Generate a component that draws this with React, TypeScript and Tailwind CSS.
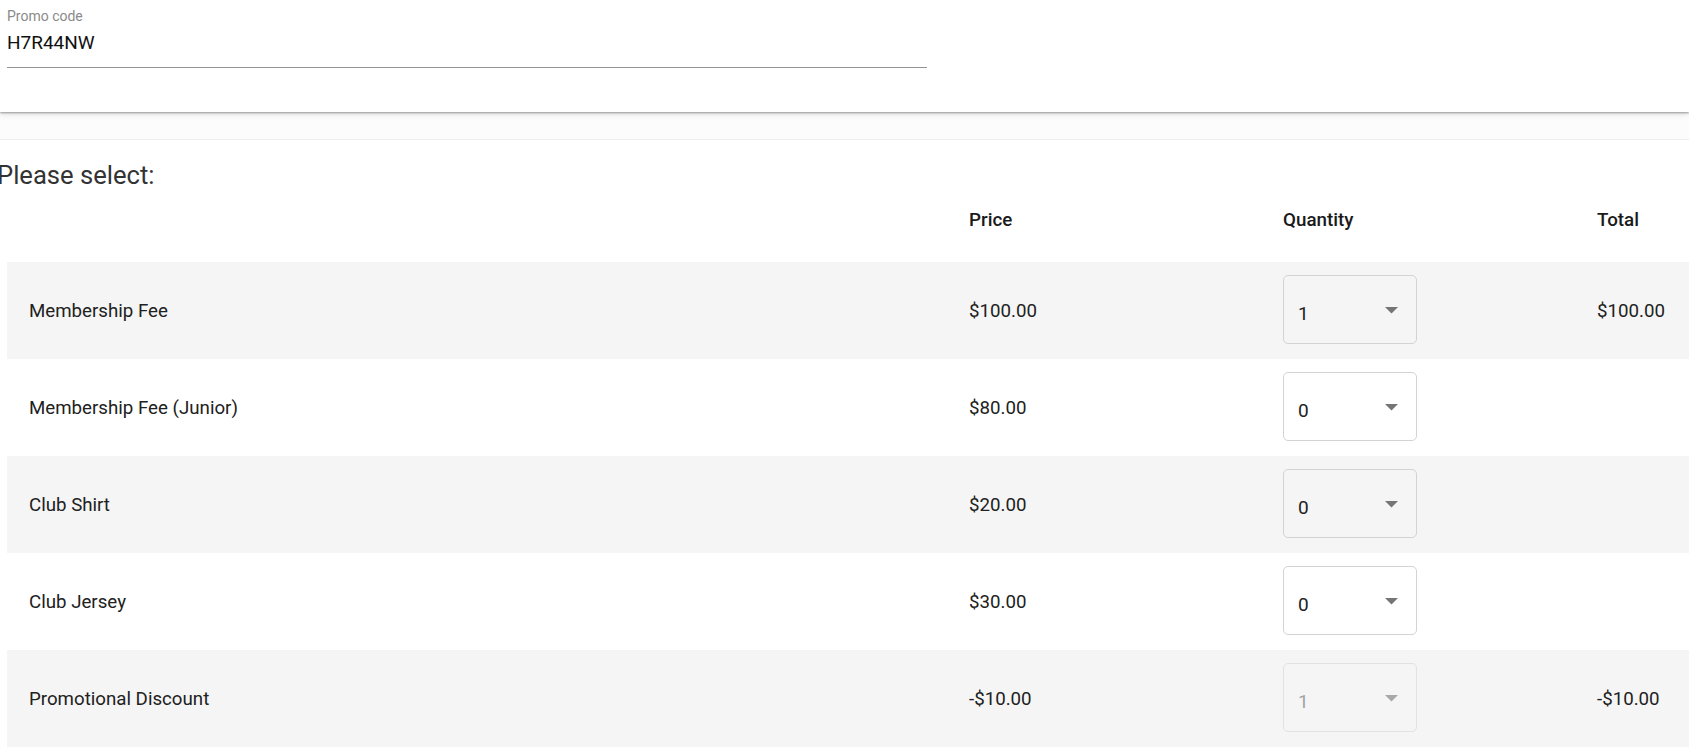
import React from "react";

type Row = {
  name: string;
  price: string;
  qty: string;
  total: string;
  disabled?: boolean;
};

const rows: Row[] = [
  { name: "Membership Fee", price: "$100.00", qty: "1", total: "$100.00" },
  { name: "Membership Fee (Junior)", price: "$80.00", qty: "0", total: "" },
  { name: "Club Shirt", price: "$20.00", qty: "0", total: "" },
  { name: "Club Jersey", price: "$30.00", qty: "0", total: "" },
  { name: "Promotional Discount", price: "-$10.00", qty: "1", total: "-$10.00", disabled: true },
];

function QtySelect({ value, disabled }: { value: string; disabled?: boolean }) {
  return (
    <div
      className={
        disabled
          ? "relative h-[69px] w-[134px] rounded-[5px] border border-[#e2e2e2]"
          : "relative h-[69px] w-[134px] rounded-[5px] border border-[#d3d3d3]"
      }
    >
      <div
        className={
          disabled
            ? "pl-[14px] pt-[26px] text-[19px] leading-[24px] text-[#a3a3a3]"
            : "pl-[14px] pt-[26px] text-[19px] leading-[24px] text-[#212121]"
        }
      >
        {value}
      </div>
      <svg
        className="absolute right-[18px] top-[31px]"
        width="13"
        height="7"
        viewBox="0 0 13 7"
      >
        <polygon points="0,0 13,0 6.5,6.5" fill={disabled ? "#a8a8a8" : "#757575"} />
      </svg>
    </div>
  );
}

export default function App() {
  return (
    <div className="h-[747px] w-[1689px] overflow-hidden bg-white font-['Roboto','Noto_Sans',sans-serif] text-[#212121]">
      {/* Promo code card */}
      <div className="relative z-10 h-[112px] bg-white px-[7px] pt-[8px] shadow-[0_1px_2px_rgba(0,0,0,0.35),0_2px_6px_rgba(0,0,0,0.12)]">
        <div className="w-[920px]">
          <div className="text-[14px] leading-[16px] text-[#8a8a8a]">Promo code</div>
          <div className="mt-[7px] text-[19px] leading-[24px] text-[#111111]">H7R44NW</div>
          <div className="mt-[12px] h-px bg-[#949494]" />
        </div>
      </div>

      <div className="h-[27px] bg-[#fcfcfc]" />

      {/* Selection section */}
      <div className="border-t border-[#eeeeee] bg-white">
        <div className="ml-[-3px] pt-[19px] text-[25.6px] leading-[32px] text-[#333333]">Please select:</div>

        <div className="ml-[7px] w-[1882px]">
          <div className="flex h-[71px] items-start text-[18.8px] font-medium leading-[24px] text-[#1a1a1a]">
            <div className="w-[940px] pl-[22px]" />
            <div className="w-[314px] pl-[22px] pt-[17px]">Price</div>
            <div className="w-[314px] pl-[22px] pt-[17px]">Quantity</div>
            <div className="w-[314px] pl-[22px] pt-[17px]">Total</div>
          </div>

          {rows.map((r, i) => (
            <div
              key={r.name}
              className={
                i % 2 === 0
                  ? "flex h-[97px] items-center bg-[#f5f5f5] text-[18.7px] leading-[24px]"
                  : "flex h-[97px] items-center bg-white text-[18.7px] leading-[24px]"
              }
            >
              <div className="w-[940px] pl-[22px]">{r.name}</div>
              <div className="w-[314px] pl-[22px]">{r.price}</div>
              <div className="w-[314px] self-start pl-[22px] pt-[13px]">
                <QtySelect value={r.qty} disabled={r.disabled} />
              </div>
              <div className="w-[314px] pl-[22px]">{r.total}</div>
            </div>
          ))}
        </div>
      </div>
    </div>
  );
}
